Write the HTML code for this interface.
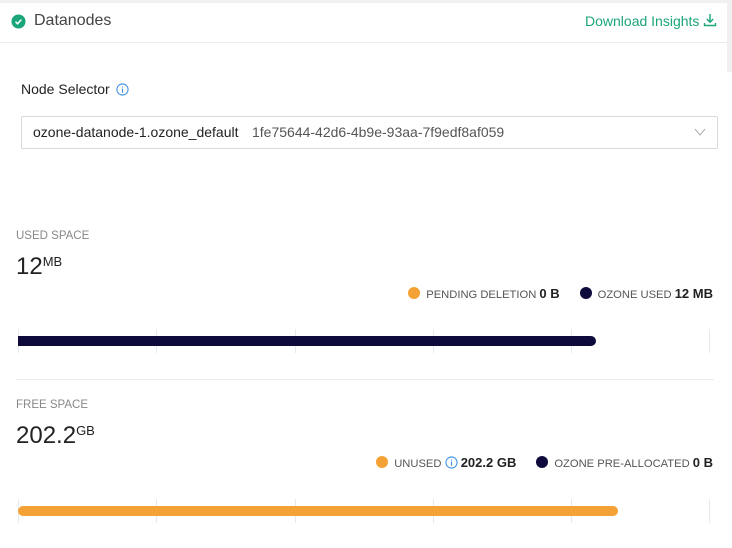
<!DOCTYPE html>
<html><head><meta charset="utf-8"><style>
*{margin:0;padding:0;box-sizing:border-box}
body{width:732px;height:548px;background:#fff;font-family:"Liberation Sans",sans-serif;position:relative;overflow:hidden;color:#333}
.a{position:absolute;white-space:nowrap}
.tick{position:absolute;width:1px;background:#e6e9f0}
.dot{display:inline-block;width:12px;height:12px;border-radius:50%;vertical-align:-1px;margin-right:6px}
.lg{font-size:11.2px;color:#555}
.lg b{color:#222;font-size:13px}
</style></head><body>
<div class="a" style="left:0;top:0;width:732px;height:3px;background:#f0f0f0"></div>
<div class="a" style="left:727px;top:0;width:5px;height:72px;background:#f0f0f0"></div>
<div class="a" style="left:0;top:42px;width:727px;height:1px;background:#ececec"></div>
<svg class="a" style="left:11px;top:14px" width="15" height="15" viewBox="0 0 16 16"><circle cx="8" cy="8" r="7.5" fill="#1aa57a"/><path d="M4.8 8.2l2.2 2.2 4-4.4" stroke="#fff" stroke-width="1.6" fill="none"/></svg>
<div class="a" style="left:34px;top:12px;font-size:16px;color:#444">Datanodes</div>
<div class="a" style="left:585px;top:13px;font-size:14px;color:#1aa57a">Download Insights</div>
<svg class="a" style="left:703px;top:13px" width="14" height="14" viewBox="0 0 14 14"><path d="M7 1v8M3.8 6l3.2 3.2L10.2 6M1.5 10v2.5h11V10" stroke="#1aa57a" stroke-width="1.4" fill="none"/></svg>
<div class="a" style="left:21px;top:81px;font-size:14px;color:#222">Node Selector</div>
<svg class="a" style="left:116px;top:83px" width="13" height="13" viewBox="0 0 14 14"><circle cx="7" cy="7" r="6" stroke="#3a8ee6" stroke-width="1.1" fill="none"/><path d="M7 6v4.5M7 3.8v1" stroke="#3a8ee6" stroke-width="1.2"/></svg>
<div class="a" style="left:21px;top:116px;width:697px;height:33px;border:1px solid #d9d9d9;border-radius:2px"></div>
<div class="a" style="left:33px;top:124px;font-size:14px;color:#222">ozone-datanode-1.ozone_default</div>
<div class="a" style="left:252px;top:124px;font-size:14px;color:#555">1fe75644-42d6-4b9e-93aa-7f9edf8af059</div>
<svg class="a" style="left:694px;top:127px" width="12" height="10" viewBox="0 0 12 10"><path d="M1 2l5 6 5-6" stroke="#aaa" stroke-width="1" fill="none"/></svg>

<div class="a" style="left:16px;top:230px;font-size:11.5px;color:#888">USED SPACE</div>
<div class="a" style="left:16px;top:253px;font-size:24px;color:#222">12<span style="font-size:13px;vertical-align:8px">MB</span></div>
<div class="a lg" style="right:19px;top:286px"><span class="dot" style="background:#f4a236"></span>PENDING DELETION <b>0 B</b><span style="display:inline-block;width:20px"></span><span class="dot" style="background:#0f0a3c"></span>OZONE USED <b>12 MB</b></div>
<div class="tick" style="left:18px;top:329px;height:24px"></div>
<div class="tick" style="left:156px;top:329px;height:24px"></div>
<div class="tick" style="left:295px;top:329px;height:24px"></div>
<div class="tick" style="left:433px;top:329px;height:24px"></div>
<div class="tick" style="left:571px;top:329px;height:24px"></div>
<div class="tick" style="left:709px;top:329px;height:24px"></div>
<div class="a" style="left:18px;top:336px;width:578px;height:10px;background:#0f0a3c;border-radius:0 5px 5px 0"></div>
<div class="a" style="left:16px;top:379px;width:698px;height:1px;background:#ececec"></div>

<div class="a" style="left:16px;top:399px;font-size:11.5px;color:#888">FREE SPACE</div>
<div class="a" style="left:16px;top:422px;font-size:24px;color:#222">202.2<span style="font-size:13px;vertical-align:8px">GB</span></div>
<div class="a lg" style="right:19px;top:455px"><span class="dot" style="background:#f4a236"></span>UNUSED <svg width="13" height="13" viewBox="0 0 14 14" style="vertical-align:-2px"><circle cx="7" cy="7" r="6" stroke="#3a8ee6" stroke-width="1.1" fill="none"/><path d="M7 6v4.5M7 3.8v1" stroke="#3a8ee6" stroke-width="1.2"/></svg> <b>202.2 GB</b><span style="display:inline-block;width:20px"></span><span class="dot" style="background:#0f0a3c"></span>OZONE PRE-ALLOCATED <b>0 B</b></div>
<div class="tick" style="left:18px;top:499px;height:24px"></div>
<div class="tick" style="left:156px;top:499px;height:24px"></div>
<div class="tick" style="left:295px;top:499px;height:24px"></div>
<div class="tick" style="left:433px;top:499px;height:24px"></div>
<div class="tick" style="left:571px;top:499px;height:24px"></div>
<div class="tick" style="left:709px;top:499px;height:24px"></div>
<div class="a" style="left:18px;top:506px;width:600px;height:10px;background:#f4a236;border-radius:5px"></div>
</body></html>
